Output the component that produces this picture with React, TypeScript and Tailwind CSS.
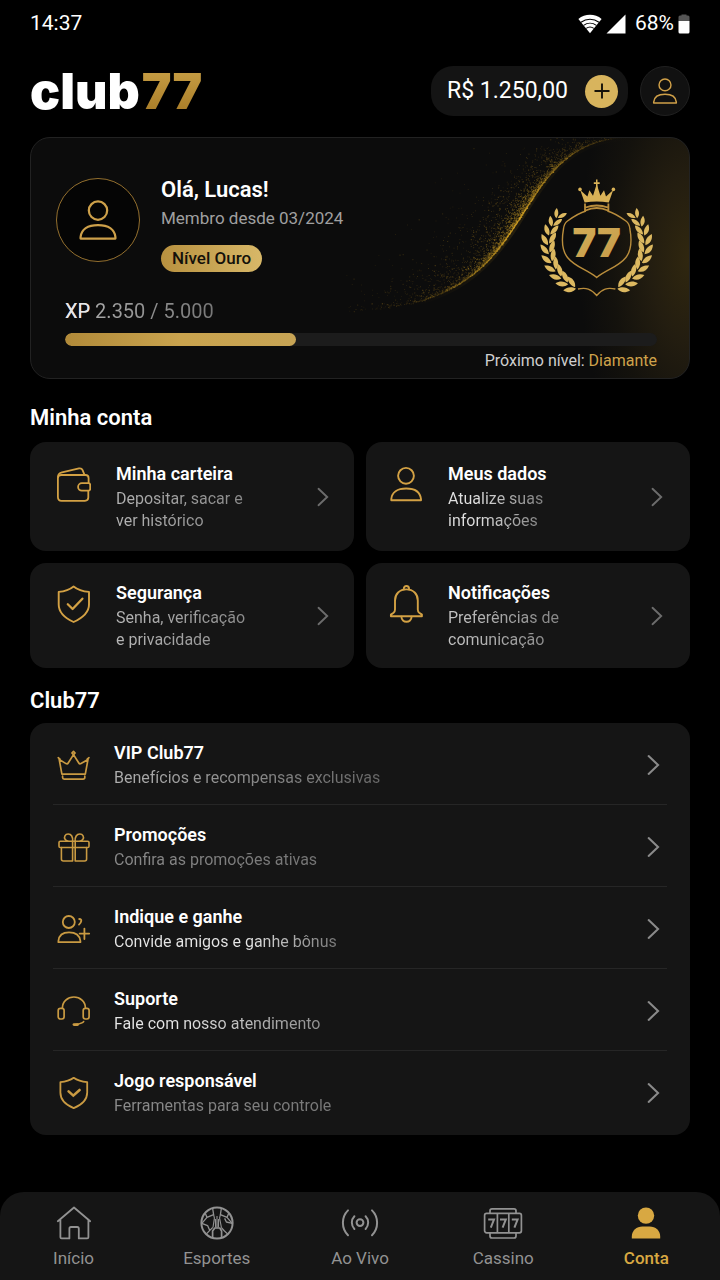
import type { ReactNode } from "react";
import clsx from "clsx";

type IconProps = {
  className?: string;
};

const UserIcon = ({ className }: IconProps) => (
  <svg viewBox="0 0 34 34" fill="none" stroke="currentColor" strokeWidth="1.9" strokeLinejoin="round" className={className} aria-hidden="true">
    <circle cx="17" cy="9" r="7.8" />
    <path d="M2.2 32.8V31.5C2.8 25 8.3 21.3 17 21.3S31.2 25 31.8 31.5V32.8Z" />
  </svg>
);

const WalletIcon = ({ className }: IconProps) => (
  <svg viewBox="0 0 34 38" fill="none" stroke="currentColor" strokeWidth="1.8" strokeLinecap="round" strokeLinejoin="round" className={className} aria-hidden="true">
    <path d="M31.6 17V12.2Q31.6 9 28.4 9H4.2Q.9 9 .9 12.2V31Q.9 34.8 4.6 34.8H28Q31.3 34.8 31.3 31.6V25" />
    <path d="M1 11C1 7.6 2.3 7 5 6.3L22 2.4Q24.6 1.9 25.6 4.2L27.5 8.8" />
    <path d="M24.8 17.2H31.5Q33.2 17.2 33.2 18.9V22.7Q33.2 24.6 31.5 24.6H24.8A3.7 3.7 0 0 1 24.8 17.2Z" />
  </svg>
);

const ProfileIcon = ({ className }: IconProps) => (
  <svg viewBox="0 0 34 38" fill="none" stroke="currentColor" strokeWidth="1.9" strokeLinejoin="round" className={className} aria-hidden="true">
    <circle cx="17" cy="9.8" r="7.9" />
    <path d="M2.3 34.3V33C2.8 26.3 8.4 22.5 17.2 22.5S31.2 26.3 32 33V34.3Z" />
  </svg>
);

const ShieldCheckIcon = ({ className }: IconProps) => (
  <svg viewBox="0 0 34 38" fill="none" stroke="currentColor" strokeWidth="1.9" strokeLinecap="round" strokeLinejoin="round" className={className} aria-hidden="true">
    <path d="M16.6 1.4C12.2 5 7.2 6.4 1.7 6.9V19.5C1.7 28 8.5 33.3 16.6 37C24.7 33.3 32 28 32 19.5V6.9C26.4 6.4 21 5 16.6 1.4Z" />
    <path d="M10.8 19.3L15.6 24L25.4 13.7" strokeWidth="2.3" />
  </svg>
);

const BellIcon = ({ className }: IconProps) => (
  <svg viewBox="0 0 34 38" fill="none" stroke="currentColor" strokeWidth="1.9" strokeLinecap="round" strokeLinejoin="round" className={className} aria-hidden="true">
    <path d="M14.8 4.4V3.6A2.6 2.6 0 0 1 20 3.6V4.4" />
    <path d="M17.4 4.4C10.5 4.4 6 9 6 15.5V24.5Q6 26.6 4.6 27.7L1.9 29.6V31.3H32.9V29.6L30.2 27.7Q28.8 26.6 28.8 24.5V15.5C28.8 9 24.3 4.4 17.4 4.4Z" />
    <path d="M12.4 31.6C12.4 38.4 22.6 38.4 22.6 31.6" />
  </svg>
);

const CrownIcon = ({ className }: IconProps) => (
  <svg viewBox="0 0 34 34" fill="none" stroke="currentColor" strokeWidth="1.7" strokeLinecap="round" strokeLinejoin="round" className={className} aria-hidden="true">
    <path d="M4.9 26.2L2.2 11.4L9 15.6Q10.4 16.4 11.2 15L16.5 6.6L21.8 15Q22.6 16.4 24 15.6L31 11.4L28.3 26.2Z" />
    <path d="M5.6 28.2V29.6Q5.6 31.2 7.2 31.2H26Q27.8 31.2 27.8 29.6V28.2" />
    <path d="M16.5 3.4L18.1 5L16.5 6.6L14.9 5ZM1.2 9.7L3 11.2M32 9.7L30.2 11.2" />
  </svg>
);

const GiftIcon = ({ className }: IconProps) => (
  <svg viewBox="0 0 34 34" fill="none" stroke="currentColor" strokeWidth="1.6" strokeLinecap="round" strokeLinejoin="round" className={className} aria-hidden="true">
    <rect x="2" y="11.2" width="30" height="6.3" rx="1.3" />
    <path d="M4.4 17.5V29Q4.4 31 6.4 31H15.6V11.2M29.6 17.5V29Q29.6 31 27.6 31H18.2V11.2" />
    <path d="M15.6 11.2C16 7 14.4 4 11.2 4C8 4 6.8 7 8 9.2Q8.9 11 11 11.2M18.2 11.2C17.8 7 19.6 4 22.8 4C26 4 27.2 7 26 9.2Q25.1 11 23 11.2" />
  </svg>
);

const InviteIcon = ({ className }: IconProps) => (
  <svg viewBox="0 0 34 34" fill="none" stroke="currentColor" strokeWidth="1.8" strokeLinecap="round" strokeLinejoin="round" className={className} aria-hidden="true">
    <circle cx="11.8" cy="10" r="6" />
    <path d="M1.4 30.2V29C1.9 23.6 5.6 20.4 12 20.4S22.7 23.6 23.4 29V30.2Z" />
    <path d="M22.2 7Q24.8 7.2 24.2 9.2Q24 11 22 12.6M27.4 16.6V27M22.6 21.6H32.2" />
  </svg>
);

const HeadsetIcon = ({ className }: IconProps) => (
  <svg viewBox="0 0 34 34" fill="none" stroke="currentColor" strokeWidth="1.7" strokeLinecap="round" className={className} aria-hidden="true">
    <path d="M5.4 14V13.8C5.4 7.5 10.6 3 16.9 3S28.4 7.5 28.4 13.8V14" />
    <rect x="1.2" y="14.4" width="5.9" height="10.6" rx="2.2" />
    <rect x="26.2" y="14.4" width="5.9" height="10.6" rx="2.2" />
    <path d="M26.6 27.6C25.4 29.6 22.8 29.8 17.8 30.6" />
    <path d="M17 30.6H20.6" strokeWidth="2.8" />
  </svg>
);

const ResponsibleIcon = ({ className }: IconProps) => (
  <svg viewBox="0 0 34 34" fill="none" stroke="currentColor" strokeWidth="1.8" strokeLinecap="round" strokeLinejoin="round" className={className} aria-hidden="true">
    <path d="M16.7 1.8C12.9 4.6 8.5 5.8 3.4 6.2V16.6C3.4 24.4 9.3 29.2 16.7 32.2C24.1 29.2 30.2 24.4 30.2 16.6V6.2C25.1 5.8 20.5 4.6 16.7 1.8Z" />
    <path d="M11.6 15.4L16.3 19.6L22.6 14" strokeWidth="2.6" strokeLinejoin="miter" />
  </svg>
);

const ChevronIcon = ({ className }: IconProps) => (
  <svg viewBox="0 0 12 20" fill="none" stroke="currentColor" strokeWidth="1.9" strokeLinecap="round" className={className} aria-hidden="true">
    <path d="M1.5 1.8L10.2 10L1.5 18.2" />
  </svg>
);

const HomeIcon = () => (
  <svg viewBox="0 0 36 36" fill="none" stroke="currentColor" strokeWidth="1.8" strokeLinecap="round" strokeLinejoin="round" className="size-9" aria-hidden="true">
    <path d="M1.8 16.2L18 2.5L34.2 16.2M4.4 14.5V32.2Q4.4 33.4 5.6 33.4H13.4V23.6Q13.4 22 15 22H21.2Q22.8 22 22.8 23.6V33.4H31.2Q32.4 33.4 32.4 32.2V14.5" />
  </svg>
);

const BallIcon = () => (
  <svg viewBox="0 0 36 36" fill="none" stroke="currentColor" strokeWidth="1.3" strokeLinejoin="round" className="size-9" aria-hidden="true">
    <circle cx="18" cy="18" r="15.6" strokeWidth="2" />
    <path d="M13.6 3L14.6 9.6L8 12.4L2.8 18.4M22.4 3L21.4 9.6L28 12.4L33.2 18.4M8 12.4L6.4 8.4M28 12.4L29.6 8.4" />
    <path d="M2.8 18.4L8.6 20.6L10.8 25.4L7 29.4M33.2 18.4L27.4 17L25.6 13.4M10.8 25.4L13.8 22.4M29 29.4L25.2 25.8L22.2 22.4" />
    <path d="M13.6 33V26L15.8 23H20.8L22.6 26V33" strokeWidth="1.7" />
    <path d="M14.6 9.6L15.4 13L14 22.4M21.4 9.6L20.6 13L22.4 22.4M18 11V22.6M16.4 14L16.6 22.6M19.6 14L19.4 22.6" strokeWidth="1.1" />
  </svg>
);

const LiveIcon = () => (
  <svg viewBox="0 0 40 36" fill="none" stroke="currentColor" strokeWidth="2" strokeLinecap="round" className="h-9 w-10" aria-hidden="true">
    <circle cx="20" cy="17.6" r="3.4" />
    <path d="M14.4 11.2C11 14.6 11 20.6 14.4 24M25.6 11.2C29 14.6 29 20.6 25.6 24M8 5.4C1.2 12 1.2 23.6 8 30.2M32 5.4C38.8 12 38.8 23.6 32 30.2" />
  </svg>
);

const SlotsIcon = () => (
  <svg viewBox="0 0 40 36" fill="none" stroke="currentColor" strokeWidth="1.7" strokeLinejoin="round" className="h-9 w-10" aria-hidden="true">
    <rect x="1.6" y="8.4" width="36.8" height="19.4" rx="2" />
    <path d="M7 8.4V5.8Q7 3.8 9 3.8H31Q33 3.8 33 5.8V8.4M7 27.8V31Q7 33 9 33H31Q33 33 33 31V27.8M14.4 8.4V27.8M25.8 8.4V27.8" />
    <path d="M5.2 14.6H11L7.8 22.6M17 14.6H22.8L19.6 22.6M28.8 14.6H34.6L31.4 22.6" strokeWidth="2" strokeLinejoin="miter" />
  </svg>
);

const AccountIcon = () => (
  <svg viewBox="0 0 36 36" fill="currentColor" className="size-9" aria-hidden="true">
    <circle cx="18" cy="10.6" r="8.2" />
    <path d="M3.8 33.6V31.6C3.8 25.6 8.6 21.6 14.4 21.6H21.6C27.6 21.6 32.2 25.6 32.2 31.6V33.6Z" />
  </svg>
);

// One laurel branch: pairs of leaves along an arc, measured from the bottom.
const leaves = Array.from({ length: 10 }, (_, i) => {
  const angle = 27 + i * 11;
  const rad = (angle * Math.PI) / 180;
  const radius = 46 + i * 0.35;
  return {
    x: 66.7 - Math.sin(rad) * radius,
    y: 77 + Math.cos(rad) * radius,
    turn: angle - 90,
    scale: 1 - Math.max(0, i - 6) * 0.07,
  };
});

const Laurel = () => (
  <g fill="url(#emblemGold)">
    {leaves.map(({ x, y, turn, scale }, i) => (
      <g key={i} transform={`translate(${x} ${y}) rotate(${turn}) scale(${scale})`}>
        <path d="M-.6 .5C-5.8-.6-8.2-4.6-7.6-10.2C-3.2-8.2-.4-5-.6 .5Z" />
        <path d="M.4-1C-.2-6.4 2-10.6 6.6-12.4C7.6-7.4 5.4-2.8 .4-1Z" />
      </g>
    ))}
  </g>
);

const Emblem = ({ className }: IconProps) => (
  <svg viewBox="10 9 113 119" className={className} role="img" aria-label="77">
    <defs>
      <linearGradient id="emblemGold" gradientUnits="userSpaceOnUse" x1="30" y1="15" x2="90" y2="125">
        <stop offset="0" stopColor="#dcb860" />
        <stop offset="0.5" stopColor="#cda652" />
        <stop offset="1" stopColor="#bd9140" />
      </linearGradient>
    </defs>
    <Laurel />
    <g transform="translate(133.4 0) scale(-1 1)">
      <Laurel />
    </g>
    <g fill="none" stroke="#b98d3c" strokeWidth="1.4">
      <path d="M56 41C49 43 43 47 37.5 51Q34 53.5 33.5 59C31.5 70 32.5 81 37.5 87.5C45 97 57 99.5 66.7 107.5C76.4 99.5 88.4 97 95.9 87.5C100.9 81 101.9 70 99.9 59Q99.4 53.5 95.9 51C90.4 47 84.4 43 77.4 41" />
      <path d="M48 119C56 117.5 61 118.5 66.7 125.5C72.4 118.5 77.4 117.5 85.4 119" />
      <path d="M55.5 40.5Q66.7 35.5 78 40.5M55.5 37.5Q66.7 33.5 78 37.5M55 33.5V41M78.4 33.5V41" strokeWidth="1.8" />
    </g>
    <g fill="#d9b257">
      <path d="M54.6 32.5L50.2 20L57.4 26.5L59.4 20.3L63 25.8L66.7 14L70.4 25.8L74 20.3L76 26.5L83.2 20L78.8 32.5Q66.7 30.5 54.6 32.5Z" />
      <path d="M66 9.5H67.5V12.2H69.7V14H67.5V18H66V14H63.8V12.2H66Z" />
      <circle cx="50" cy="19.4" r="1.8" />
      <circle cx="83.4" cy="19.4" r="1.8" />
    </g>
    <text x="66.7" y="87" textAnchor="middle" fontSize="40" fill="url(#emblemGold)" className="font-[Inter] font-black">
      77
    </text>
  </svg>
);

type Point = [number, number];

const bezier = ([p0, p1, p2, p3]: Point[], t: number, axis: 0 | 1) => {
  const u = 1 - t;
  return u * u * u * p0[axis] + 3 * u * u * t * p1[axis] + 3 * u * t * t * p2[axis] + t * t * t * p3[axis];
};

const wave: Point[][] = [
  [[300, 175], [420, 175], [455, 135], [487, 86]],
  [[487, 86], [515, 43], [535, 2], [600, 0]],
];

// Gold dust thrown off the upper side of the wave, grouped by brightness.
const buildDust = () => {
  let seed = 77;
  const random = () => {
    seed = (seed * 16807) % 2147483647;
    return seed / 2147483647;
  };
  const groups = ["", "", "", "", ""];
  for (let i = 0; i < 4600; i++) {
    const along = 0.05 + random() * 1.95;
    const curve = wave[along < 1 ? 0 : 1];
    const t = along % 1;
    const x = bezier(curve, t, 0);
    const y = bezier(curve, t, 1);
    const dx = bezier(curve, t + 0.01, 0) - x;
    const dy = bezier(curve, t + 0.01, 1) - y;
    const length = Math.hypot(dx, dy);
    const spread = along < 1 ? 14 : 14 - t * 9;
    const distance = -Math.log(1 - random()) * spread * (random() < 0.35 ? 0.15 : 1);
    const middle = Math.max(0, 1 - Math.abs(along - 1) * 1.05);
    const bright = middle * Math.exp(-distance / 22);
    // the trail thins out towards both ends
    if (random() > 0.08 + middle * 1.2) continue;
    const level = Math.min(4, Math.floor(bright * 4 + random() * 0.9));
    const size = random() < 0.12 ? 1.3 : 0.8;
    const px = (x + (dy / length) * distance).toFixed(1);
    const py = (y - (dx / length) * distance).toFixed(1);
    groups[level] += `M${px} ${py}h${size}v${size}h-${size}z`;
  }
  return groups;
};

const dust = buildDust();
const dustOpacity = [0.14, 0.24, 0.36, 0.5, 0.75];

const GoldWave = ({ className }: IconProps) => (
  <svg viewBox="270 0 390 242" className={className} aria-hidden="true">
    <defs>
      <linearGradient id="waveLine" gradientUnits="userSpaceOnUse" x1="390" y1="175" x2="600" y2="0">
        <stop offset="0" stopColor="#a87b12" stopOpacity="0" />
        <stop offset="0.45" stopColor="#d9a520" stopOpacity="0.8" />
        <stop offset="0.8" stopColor="#a87b12" stopOpacity="0.2" />
        <stop offset="1" stopColor="#a87b12" stopOpacity="0" />
      </linearGradient>
    </defs>
    <path d="M300 175C420 175 455 135 487 86C515 43 535 2 600 0" fill="none" stroke="url(#waveLine)" strokeWidth="7" opacity="0.15" />
    <path d="M300 175C420 175 455 135 487 86C515 43 535 2 600 0" fill="none" stroke="url(#waveLine)" strokeWidth="1.2" />
    {dust.map((d, i) => (
      <path key={i} d={d} fill="#d8a526" opacity={dustOpacity[i]} />
    ))}
  </svg>
);

const StatusBar = () => (
  <div className="flex h-12 items-center justify-between px-[30px] text-[21px]">
    <span>14:37</span>
    <div className="flex items-center">
      <svg viewBox="0 0 24 20" className="h-5 w-6" aria-hidden="true">
        <path d="M12 19.2L.4 5C7-.6 17-.6 23.6 5Z" fill="#fff" />
        <path d="M3 8.2C8.4 4.2 15.6 4.2 21 8.2M5.6 11.4C9.4 8.6 14.6 8.6 18.4 11.4M8.2 14.4C10.4 12.8 13.6 12.8 15.8 14.4" fill="none" stroke="#000" strokeWidth="1.1" />
      </svg>
      <svg viewBox="0 0 20 20" className="ml-1 size-5" aria-hidden="true">
        <path d="M19.5 .5V19.5H.5Z" fill="#fff" />
      </svg>
      <span className="ml-[9px]">68%</span>
      <svg viewBox="0 0 12 20" className="ml-1 h-5 w-3" aria-hidden="true">
        <path d="M3.5 1.5V.5H8.5V1.5H10Q11.5 1.5 11.5 3V7H.5V3Q.5 1.5 2 1.5Z" fill="#555" />
        <path d="M.5 7H11.5V18Q11.5 19.5 10 19.5H2Q.5 19.5 .5 18Z" fill="#fff" />
      </svg>
    </div>
  </div>
);

const Header = () => (
  <header className="mt-[18px] flex h-[50px] items-center justify-between">
    <a href="#" className="flex gap-[2px] font-[Inter] text-[50px] leading-[50px] font-black">
      <span>club</span>
      <span className="bg-linear-to-b from-[#c9a046] to-[#a67a25] bg-clip-text text-transparent">77</span>
    </a>
    <div className="flex gap-3">
      <div className="flex h-[50px] items-center gap-[17px] rounded-[22px] bg-[#141414] pr-[10px] pl-4">
        <span className="text-[23px]">R$ 1.250,00</span>
        <button type="button" aria-label="Depositar" className="grid size-[33px] place-items-center rounded-full bg-[#d8b45d] text-[#16120a]">
          <svg viewBox="0 0 16 16" stroke="currentColor" strokeWidth="1.9" className="size-4" aria-hidden="true">
            <path d="M8 .5V15.5M.5 8H15.5" />
          </svg>
        </button>
      </div>
      <button type="button" aria-label="Perfil" className="grid size-[50px] place-items-center rounded-full border border-[#202020] bg-[#111] text-[#d0a048]">
        <UserIcon className="size-[26px]" />
      </button>
    </div>
  </header>
);

const ProfileCard = () => (
  <section className="relative mt-[21px] overflow-hidden rounded-[20px] border border-[#222] bg-[#0c0c0c] bg-[radial-gradient(ellipse_110px_240px_at_100%_50%,#30270f_0%,#231d10_35%,#14120d_70%,transparent_100%)] pt-[38px] pb-[5px]">
    <GoldWave className="absolute -top-px -right-px h-[242px] w-[390px]" />
    <div className="relative flex items-start pr-[36px] pl-[25px]">
      <div className="mt-[2px] grid size-[84px] place-items-center rounded-full border border-[#94702f] bg-[#050505] text-[#cda04a]">
        <UserIcon className="size-10" />
      </div>
      <div className="ml-[21px]">
        <h1 className="text-[22px] leading-7 font-semibold">Olá, Lucas!</h1>
        <p className="mt-[2px] text-[17px] leading-6 text-[#a0a0a0]">Membro desde 03/2024</p>
        <span className="mt-[15px] inline-block rounded-full bg-linear-to-r from-[#b8913f] to-[#d8b868] px-[11px] text-[17px] leading-[27px] font-medium text-[#14110a]">
          Nível Ouro
        </span>
      </div>
      <Emblem className="mt-[3px] ml-auto h-[119px] w-[113px]" />
    </div>
    <div className="relative pr-8 pl-[34px]">
      <p className="w-fit bg-linear-to-r from-[#b4b4b4] to-[#777] bg-clip-text text-xl leading-[27px] text-transparent">
        <span className="text-[#e8e8e8]">XP</span> 2.350 / 5.000
      </p>
      <div
        role="progressbar"
        aria-label="XP"
        aria-valuenow={2350}
        aria-valuemax={5000}
        className="mt-2 h-[13px] overflow-hidden rounded-full bg-[#1c1c1c]"
      >
        <div className="h-full w-[39%] rounded-full bg-linear-to-r from-[#b18a39] via-[#c9a34e] to-[#c7a455]" />
      </div>
      <p className="mt-[3px] text-right text-base leading-6 text-[#cfcfcf]">
        Próximo nível: <span className="text-[#cfa34b]">Diamante</span>
      </p>
    </div>
  </section>
);

type MenuItem = {
  title: string;
  description: ReactNode;
  icon: (props: IconProps) => ReactNode;
  tone: string;
};

const accountItems: MenuItem[] = [
  {
    title: "Minha carteira",
    description: <>Depositar, sacar e<br />ver histórico</>,
    icon: WalletIcon,
    tone: "from-[#b4b4b4] to-[#888]",
  },
  {
    title: "Meus dados",
    description: <>Atualize suas<br />informações</>,
    icon: ProfileIcon,
    tone: "from-[#e0e0e0] from-30% to-[#808080]",
  },
  {
    title: "Segurança",
    description: <>Senha, verificação<br />e privacidade</>,
    icon: ShieldCheckIcon,
    tone: "from-[#b8b8b8] to-[#8c8c8c]",
  },
  {
    title: "Notificações",
    description: <>Preferências de<br />comunicação</>,
    icon: BellIcon,
    tone: "from-[#c6c6c6] to-[#868686]",
  },
];

const clubItems: MenuItem[] = [
  {
    title: "VIP Club77",
    description: "Benefícios e recompensas exclusivas",
    icon: CrownIcon,
    tone: "from-[#b0b0b0] to-[#666]",
  },
  {
    title: "Promoções",
    description: "Confira as promoções ativas",
    icon: GiftIcon,
    tone: "from-[#8a8a8a] to-[#757575]",
  },
  {
    title: "Indique e ganhe",
    description: "Convide amigos e ganhe bônus",
    icon: InviteIcon,
    tone: "from-[#e6e6e6] from-60% to-[#777]",
  },
  {
    title: "Suporte",
    description: "Fale com nosso atendimento",
    icon: HeadsetIcon,
    tone: "from-[#e6e6e6] from-30% to-[#909090]",
  },
  {
    title: "Jogo responsável",
    description: "Ferramentas para seu controle",
    icon: ResponsibleIcon,
    tone: "from-[#8c8c8c] to-[#777]",
  },
];

const AccountCard = ({ title, description, icon: Icon, tone }: MenuItem) => (
  <a href="#" className="flex items-center rounded-2xl bg-[#151515] odd:pr-[25px] odd:pl-[27px] even:pr-[27px] even:pl-[23px]">
    <div className="flex flex-1 items-start gap-[25px]">
      <Icon className="mt-1 h-[38px] w-[34px] shrink-0 text-[#d3a144]" />
      <div>
        <h3 className="text-lg leading-6 font-semibold">{title}</h3>
        <p className={clsx("mt-[2px] w-fit bg-linear-to-r bg-clip-text text-base leading-[22px] text-transparent", tone)}>{description}</p>
      </div>
    </div>
    <ChevronIcon className="h-5 w-3 text-[#6c6c6c]" />
  </a>
);

const ClubRow = ({ title, description, icon: Icon, tone }: MenuItem) => (
  <li className="border-b border-[#262626] last:border-transparent">
    <a href="#" className="flex items-center pt-[18px] pr-[7px] pb-[15px] pl-1">
      <Icon className="size-[34px] shrink-0 text-[#c99a42]" />
      <div className="ml-[23px] flex-1">
        <h3 className="text-lg leading-6 font-semibold">{title}</h3>
        <p className={clsx("mt-[2px] w-fit bg-linear-to-r bg-clip-text text-base leading-[22px] text-transparent", tone)}>{description}</p>
      </div>
      <ChevronIcon className="h-[22px] w-[13px] text-[#8a8a8a]" />
    </a>
  </li>
);

const tabs = [
  { label: "Início", icon: HomeIcon },
  { label: "Esportes", icon: BallIcon },
  { label: "Ao Vivo", icon: LiveIcon },
  { label: "Cassino", icon: SlotsIcon },
  { label: "Conta", icon: AccountIcon, active: true },
];

const BottomNav = () => (
  <nav className="mt-auto grid grid-cols-5 rounded-t-3xl bg-[#151515] px-[2px] pt-[13px] pb-[10px]">
    {tabs.map(({ label, icon: Icon, active }) => (
      <a
        key={label}
        href="#"
        aria-current={active ? "page" : undefined}
        className={clsx("flex flex-col items-center gap-[5px] text-[17px] leading-6", active ? "font-medium text-[#d8a842]" : "text-[#929292]")}
      >
        <Icon />
        {label}
      </a>
    ))}
  </nav>
);

export default function App() {
  return (
    <div className="flex min-h-screen flex-col bg-black font-[Roboto,sans-serif] text-white">
      <StatusBar />
      <main className="px-[30px]">
        <Header />
        <ProfileCard />
        <h2 className="mt-[25px] text-[22px] leading-7 font-semibold">Minha conta</h2>
        <div className="mt-[10px] grid grid-cols-2 grid-rows-[minmax(109px,auto)_minmax(105px,auto)] gap-3">
          {accountItems.map((item) => (
            <AccountCard key={item.title} {...item} />
          ))}
        </div>
        <h2 className="mt-[19px] text-[22px] leading-7 font-semibold">Club77</h2>
        <ul className="mt-2 rounded-2xl bg-[#151515] px-[23px] pb-[2px]">
          {clubItems.map((item) => (
            <ClubRow key={item.title} {...item} />
          ))}
        </ul>
      </main>
      <BottomNav />
    </div>
  );
}
